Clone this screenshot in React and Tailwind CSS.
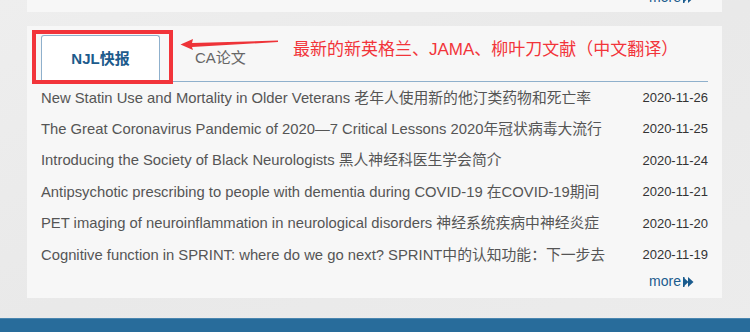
import { ChevronsRight } from "lucide-react"

const items = [
  { title: "New Statin Use and Mortality in Older Veterans 老年人使用新的他汀类药物和死亡率", date: "2020-11-26" },
  { title: "The Great Coronavirus Pandemic of 2020—7 Critical Lessons 2020年冠状病毒大流行", date: "2020-11-25" },
  { title: "Introducing the Society of Black Neurologists 黑人神经科医生学会简介", date: "2020-11-24" },
  { title: "Antipsychotic prescribing to people with dementia during COVID-19 在COVID-19期间", date: "2020-11-21" },
  { title: "PET imaging of neuroinflammation in neurological disorders 神经系统疾病中神经炎症", date: "2020-11-20" },
  { title: "Cognitive function in SPRINT: where do we go next? SPRINT中的认知功能：下一步去", date: "2020-11-19" },
]

function MoreLink() {
  return (
    <a href="#" className="flex items-center gap-[2px] text-[14px] text-[#1b5c8e]">
      more
      <svg width="11" height="10" viewBox="0 0 11 10" className="mt-[1px]">
        <path d="M0 0 L5.5 5 L0 10 Z M5 0 L10.5 5 L5 10 Z" fill="#1b5c8e" />
        <rect x="0" y="0" width="1.5" height="10" fill="#1b5c8e" />
      </svg>
    </a>
  )
}

export default function App() {
  return (
    <div
      className="relative w-[750px] h-[332px] overflow-hidden bg-gradient-to-br from-[#eeeeee] via-[#e9e9e9] to-[#ececec] flex flex-col"
      style={{ fontFamily: '"Liberation Sans", Arial, "Noto Sans CJK SC", sans-serif' }}
    >
      {/* previous card (cut off) */}
      <div className="ml-[27px] w-[695px] h-[12px] bg-[#f7f7f7] overflow-hidden flex justify-end pr-[28px]">
        <div className="-mt-[10px] leading-[14px]">
          <MoreLink />
        </div>
      </div>

      {/* news card */}
      <div className="relative mt-[14px] ml-[27px] w-[695px] h-[272px] bg-[#f7f7f7] px-[14px]">
        {/* tabs */}
        <div className="flex items-end h-[56px] pt-[9px]">
          <div className="w-[119px] h-[47px] bg-white border border-b-0 border-[#8fb0cc] rounded-t-[3px] flex items-center justify-center font-bold text-[15px] text-[#1d5b8c]">
            NJL快报
          </div>
          <div className="flex-1 h-[47px] border-b border-[#8fb0cc] flex items-center pl-[35px] text-[15px] text-[#666] pt-[1px]">
            CA论文
          </div>
        </div>

        {/* list */}
        <ul>
          {items.map((it) => (
            <li key={it.date} className="h-[31.4px] flex items-center justify-between">
              <span className="text-[14.8px] text-[#555] whitespace-nowrap">{it.title}</span>
              <span className="text-[13px] text-[#333]">{it.date}</span>
            </li>
          ))}
        </ul>
        <div className="flex justify-end pr-[14px] h-[22px] items-center">
          <MoreLink />
        </div>

        {/* annotation */}
        <div className="absolute left-[5px] top-[4px] w-[141px] h-[54px] border-4 border-[#f2343a]" />
        <svg className="absolute left-[150px] top-[10px]" width="110" height="16" viewBox="0 0 110 16">
          <path d="M3.5 8.5 L16 3 L15 7 L101 4.5 L101 6 L15 11 L16 14 Z" fill="#ee3338" />
        </svg>
        <div className="absolute left-[266px] top-[13px] text-[17px] leading-[22px] text-[#f2343a] whitespace-nowrap">
          最新的新英格兰、JAMA、柳叶刀文献（中文翻译）
        </div>
      </div>

      {/* footer bar */}
      <div className="mt-auto h-[14px] bg-[#286c9b] border-t border-[#4a86b0]" />
    </div>
  )
}
